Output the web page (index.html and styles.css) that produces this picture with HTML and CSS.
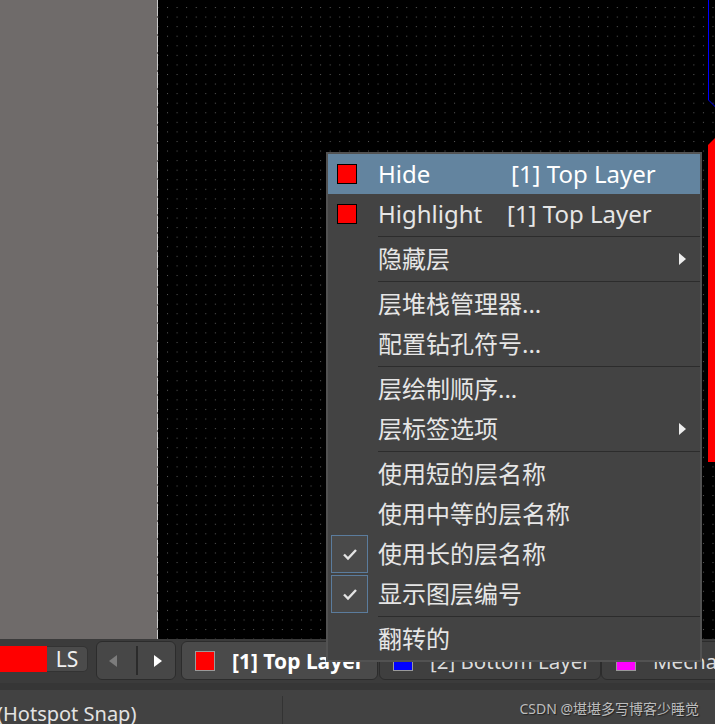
FILE: index.html
```html
<!DOCTYPE html>
<html>
<head>
<meta charset="utf-8">
<link rel="stylesheet" href="styles.css">
</head>
<body>
<div class="app">
  <div class="workspace">
    <div class="panel"></div>
    <div class="edge"></div>
    <div class="canvas">
      <svg class="board" width="557" height="639" viewBox="0 0 557 639">
        <defs>
          <pattern id="grid" x="9" y="7" width="9.57" height="9.57" patternUnits="userSpaceOnUse">
            <rect width="1" height="1" fill="#5a5a5a"/>
          </pattern>
        </defs>
        <rect width="557" height="639" fill="url(#grid)"/>
        <polyline points="550.5,0 550.5,100 557.5,107" fill="none" stroke="#0000ff" stroke-width="1"/>
        <polygon points="557,138 550,145 550,462 557,462" fill="#ff0000"/>
      </svg>
    </div>
  </div>

  <div class="tabbar">
    <div class="ls-group"><span class="ls-color"></span><span class="ls-btn">LS</span></div>
    <div class="nav">
      <span class="tri tri-left"></span>
      <span class="nav-sep"></span>
      <span class="tri tri-right"></span>
    </div>
    <div class="tab tab-active"><span class="swatch sw-red"></span><span class="tab-text">[1] Top Layer</span></div>
    <div class="tab tab-2"><span class="swatch sw-blue"></span><span class="tab-text">[2] Bottom Layer</span></div>
    <div class="tab tab-3"><span class="swatch sw-magenta"></span><span class="tab-text">Mechanical 1</span></div>
  </div>

  <div class="statusbar">
    <div class="status-left"><span class="status-text">(Hotspot Snap)</span></div>
    <span class="status-div"></span>
    <span class="watermark">CSDN @堪堪多写博客少睡觉</span>
  </div>

  <div class="menu">
    <div class="item hl">
      <span class="icon"><span class="sq"></span></span>
      <span class="label"><span class="col-hide">Hide</span>[1] Top Layer</span>
    </div>
    <div class="item">
      <span class="icon"><span class="sq"></span></span>
      <span class="label"><span class="col-highlight">Highlight</span>[1] Top Layer</span>
    </div>
    <div class="sep"></div>
    <div class="item">
      <span class="icon"></span>
      <span class="label">隐藏层</span>
      <span class="sub"></span>
    </div>
    <div class="sep"></div>
    <div class="item">
      <span class="icon"></span>
      <span class="label">层堆栈管理器...</span>
    </div>
    <div class="item">
      <span class="icon"></span>
      <span class="label">配置钻孔符号...</span>
    </div>
    <div class="sep"></div>
    <div class="item">
      <span class="icon"></span>
      <span class="label">层绘制顺序...</span>
    </div>
    <div class="item">
      <span class="icon"></span>
      <span class="label">层标签选项</span>
      <span class="sub"></span>
    </div>
    <div class="sep"></div>
    <div class="item">
      <span class="icon"></span>
      <span class="label">使用短的层名称</span>
    </div>
    <div class="item">
      <span class="icon"></span>
      <span class="label">使用中等的层名称</span>
    </div>
    <div class="item">
      <span class="icon"><span class="check"><svg width="16" height="13" viewBox="0 0 16 13"><polyline points="2,6.5 6,10.5 14,2" fill="none" stroke="#e4e4e4" stroke-width="2.4"/></svg></span></span>
      <span class="label">使用长的层名称</span>
    </div>
    <div class="item">
      <span class="icon"><span class="check"><svg width="16" height="13" viewBox="0 0 16 13"><polyline points="2,6.5 6,10.5 14,2" fill="none" stroke="#e4e4e4" stroke-width="2.4"/></svg></span></span>
      <span class="label">显示图层编号</span>
    </div>
    <div class="sep"></div>
    <div class="item">
      <span class="icon"></span>
      <span class="label">翻转的</span>
    </div>
  </div>
</div>
</body>
</html>
```

FILE: styles.css
```css
html, body {
  margin: 0;
  padding: 0;
  background: #3a3a3a;
}

.app {
  position: relative;
  width: 715px;
  height: 724px;
  overflow: hidden;
  font-family: "Noto Sans", "Noto Sans CJK SC", sans-serif;
}

/* ---------- workspace ---------- */
.workspace {
  display: flex;
  height: 639px;
}

.panel {
  width: 157px;
  flex: none;
  background: #6f6b6a;
}

.edge {
  width: 1px;
  flex: none;
  background: repeating-linear-gradient(to bottom, #c9c9c9 0, #c9c9c9 16px, #6f6b6a 16px, #6f6b6a 18px);
}

.canvas {
  flex: 1;
  background: #000;
  overflow: hidden;
}

.board {
  display: block;
}

/* ---------- tab bar ---------- */
.tabbar {
  display: flex;
  align-items: flex-start;
  height: 42px;
  padding-top: 2px;
  background: #3b3b3b;
  border-bottom: 7px solid #363636;
  box-sizing: content-box;
}

.ls-group {
  display: flex;
  margin-top: 5px;
  height: 26px;
  flex: none;
}

.ls-color {
  width: 47px;
  background: #ff0000;
}

.ls-btn {
  width: 41px;
  box-sizing: border-box;
  background: #4b4b4b;
  border: 1px solid #333;
  border-left: none;
  border-radius: 0 5px 5px 0;
  color: #f0f0f0;
  font-size: 21px;
  line-height: 24px;
  text-align: center;
}

.nav {
  display: flex;
  align-items: center;
  width: 80px;
  height: 39px;
  box-sizing: border-box;
  margin-left: 8px;
  padding-left: 12px;
  background: #474747;
  border: 1px solid #2c2c2c;
  border-radius: 6px;
  flex: none;
}

.tri {
  width: 0;
  height: 0;
  border-top: 6px solid transparent;
  border-bottom: 6px solid transparent;
}

.tri-left {
  border-right: 8px solid #7c7c7c;
}

.tri-right {
  border-left: 8px solid #ffffff;
}

.nav-sep {
  width: 2px;
  height: 29px;
  margin: 0 16px 0 19px;
  background: #2b2b2b;
}

.tab {
  display: flex;
  align-items: center;
  height: 39px;
  box-sizing: border-box;
  padding-left: 13px;
  border: 1px solid #2c2c2c;
  border-radius: 6px;
  background: #3f3f3f;
  color: #dcdcdc;
  font-size: 20.5px;
  white-space: nowrap;
  flex: none;
}

.tab-active {
  width: 197px;
  margin-left: 5px;
  background: #4a4a4a;
  color: #ffffff;
}

.tab-active .tab-text {
  font-weight: bold;
  font-size: 21px;
}

.tab-2 {
  width: 222px;
  margin-left: 1px;
}

.tab-3 {
  width: 150px;
  padding-left: 14px;
}

.swatch {
  width: 20px;
  height: 20px;
  box-sizing: border-box;
  border: 1px solid #9a9a9a;
  margin-right: 17px;
  flex: none;
}

.sw-red { background: #ff0000; }
.sw-blue { background: #0000ff; }
.sw-magenta { background: #ff00ff; }

/* ---------- status bar ---------- */
.statusbar {
  display: flex;
  align-items: flex-start;
  height: 36px;
  background: #424242;
}

.status-left {
  width: 282px;
  flex: none;
  overflow: hidden;
}

.status-text {
  display: block;
  margin-left: -3px;
  margin-top: 12px;
  font-size: 20px;
  line-height: 24px;
  color: #e2e2e2;
  white-space: nowrap;
}

.status-div {
  width: 1px;
  height: 30px;
  margin-top: 6px;
  background: #333;
  flex: none;
}

.watermark {
  margin-left: auto;
  margin-right: 16px;
  margin-top: 9px;
  font-size: 14px;
  line-height: 20px;
  color: #bdbdbd;
  text-shadow: 1px 1px 1px #222;
  white-space: nowrap;
}

/* ---------- context menu ---------- */
.menu {
  position: absolute;
  left: 326px;
  top: 152px;
  width: 376px;
  box-sizing: border-box;
  padding-bottom: 1px;
  background: #434343;
  border: 2px solid #525252;
}

.item {
  display: flex;
  align-items: center;
  height: 40px;
  font-size: 24px;
  line-height: 40px;
  color: #e6e6e6;
  white-space: nowrap;
}

.item.hl {
  background: #63849f;
  color: #ffffff;
}

.icon {
  display: flex;
  align-items: center;
  width: 50px;
  height: 40px;
  flex: none;
}

.sq {
  width: 20px;
  height: 20px;
  box-sizing: border-box;
  margin-left: 9px;
  background: #ff0000;
  border: 1px solid #000;
}

.check {
  display: flex;
  align-items: center;
  justify-content: center;
  width: 37px;
  height: 38px;
  box-sizing: border-box;
  margin-left: 3px;
  border: 1px solid #5b7c9d;
  background: #4a4a4a;
}

.check svg {
  display: block;
}

.label {
  flex: none;
}

.col-hide {
  display: inline-block;
  width: 133px;
}

.col-highlight {
  display: inline-block;
  width: 129px;
}

.sub {
  margin-left: auto;
  margin-right: 14px;
  width: 0;
  height: 0;
  border-top: 6px solid transparent;
  border-bottom: 6px solid transparent;
  border-left: 7px solid #eeeeee;
}

.sep {
  height: 1px;
  margin: 2px 0 2px 50px;
  background: #2c2c2c;
}
```
